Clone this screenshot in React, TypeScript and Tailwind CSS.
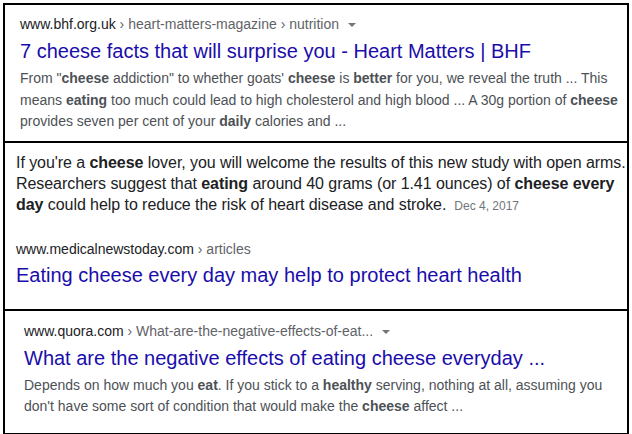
const font = { fontFamily: '"Liberation Sans", Arial, sans-serif' };

function Caret() {
  return (
    <svg width="10" height="6" viewBox="0 0 10 6" className="ml-[8px] inline-block align-middle">
      <path d="M1 1h8L5 5z" fill="#70757a" />
    </svg>
  );
}

function Crumb({ domain, path, caret }: { domain: string; path: string; caret?: boolean }) {
  return (
    <div className="whitespace-nowrap text-[14px] leading-[20px]">
      <span className="text-[#202124]">{domain}</span>
      <span className="text-[#5f6368]">{'\u00a0› ' + path}</span>
      {caret && <Caret />}
    </div>
  );
}

export default function App() {
  return (
    <div className="bg-white w-[632px] h-[434px] pt-[3px] pl-[3px]" style={font}>
      <div className="w-[626px] border-2 border-black divide-y-2 divide-black">
        <section className="pl-[15px] pt-[9px] pb-[8px]">
          <Crumb domain="www.bhf.org.uk" path="heart-matters-magazine › nutrition" caret />
          <div className="mt-[4px] text-[20px] leading-[26px] text-[#1a0dab] whitespace-nowrap">
            7 cheese facts that will surprise you - Heart Matters | BHF
          </div>
          <p className="mt-[4px] text-[14px] leading-[21.5px] text-[#4d5156] whitespace-nowrap">
            From "<b>cheese</b> addiction" to whether goats' <b>cheese</b> is <b>better</b> for you, we reveal the truth ... This
            <br />
            means <b>eating</b> too much could lead to high cholesterol and high blood ... A 30g portion of <b>cheese</b>
            <br />
            provides seven per cent of your <b>daily</b> calories and ...
          </p>
        </section>

        <section className="pl-[11px] pt-[9px] pb-[21px]">
          <p className="text-[16px] leading-[21px] text-[#202124] whitespace-nowrap tracking-[-0.06px]">
            If you're a <b>cheese</b> lover, you will welcome the results of this new study with open arms.
            <br />
            Researchers suggest that <b>eating</b> around 40 grams (or 1.41 ounces) of <b>cheese every</b>
            <br />
            <b>day</b> could help to reduce the risk of heart disease and stroke.
            <span className="ml-[8px] text-[12px] text-[#70757a] tracking-normal">Dec 4, 2017</span>
          </p>
          <div className="mt-[22px]">
            <Crumb domain="www.medicalnewstoday.com" path="articles" />
          </div>
          <div className="mt-[3px] text-[20px] leading-[26px] text-[#1a0dab] whitespace-nowrap">
            Eating cheese every day may help to protect heart health
          </div>
        </section>

        <section className="pl-[19px] pt-[10px] pb-[15px]">
          <Crumb domain="www.quora.com" path="What-are-the-negative-effects-of-eat..." caret />
          <div className="mt-[4px] text-[20px] leading-[26px] text-[#1a0dab] whitespace-nowrap">
            What are the negative effects of eating cheese everyday ...
          </div>
          <p className="mt-[4px] text-[14px] leading-[21.5px] text-[#4d5156] whitespace-nowrap">
            Depends on how much you <b>eat</b>. If you stick to a <b>healthy</b> serving, nothing at all, assuming you
            <br />
            don't have some sort of condition that would make the <b>cheese</b> affect ...
          </p>
        </section>
      </div>
    </div>
  );
}
